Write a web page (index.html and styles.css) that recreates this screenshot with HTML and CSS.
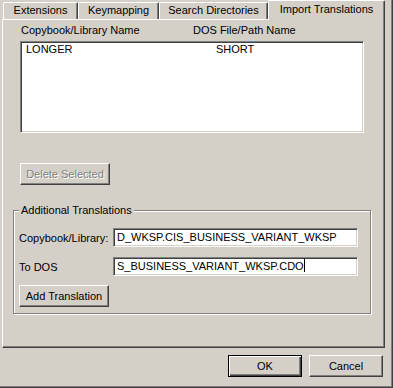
FILE: index.html
```html
<!DOCTYPE html>
<html lang="en">
<head>
  <meta charset="UTF-8">
  <title>Import Translations</title>
  <link rel="stylesheet" href="styles.css">
</head>
<body>
  <div class="window">
    <div class="tabs">
      <div class="tab tab-ext">Extensions</div>
      <div class="tab tab-key">Keymapping</div>
      <div class="tab tab-search">Search Directories</div>
      <div class="tab tab-import active">Import Translations</div>
    </div>

    <div class="panel">
      <div class="colhead">
        <span class="col-lib">Copybook/Library Name</span>
        <span>DOS File/Path Name</span>
      </div>
      <div class="list">
        <div class="list-row">
          <span class="col-item">LONGER</span>
          <span>SHORT</span>
        </div>
      </div>

      <div class="btn btn-small btn-delete disabled">Delete Selected</div>

      <div class="group">
        <div class="group-label">Additional Translations</div>
        <div class="field-row first">
          <span class="field-label">Copybook/Library:</span>
          <div class="field">D_WKSP.CIS_BUSINESS_VARIANT_WKSP</div>
        </div>
        <div class="field-row">
          <span class="field-label">To DOS</span>
          <div class="field">S_BUSINESS_VARIANT_WKSP.CDO<span class="caret"></span></div>
        </div>
        <div class="btn btn-small btn-add">Add Translation</div>
      </div>
    </div>

    <div class="footer">
      <div class="btn btn-wide default">OK</div>
      <div class="btn btn-wide">Cancel</div>
    </div>
  </div>
</body>
</html>
```

FILE: styles.css
```css
body {
  margin: 0;
  background: #d4d0c8;
  font-family: "Liberation Sans", Arial, sans-serif;
  font-size: 11px;
  color: #000;
}
.window {
  width: 393px;
  height: 388px;
  box-sizing: border-box;
  padding-left: 2px;
  border-right: 1px solid #404040;
  border-bottom: 1px solid #404040;
  box-shadow: inset -1px -1px 0 #808080;
}

/* tab strip */
.tabs {
  display: flex;
  align-items: flex-end;
  height: 19px;
  padding-left: 1px;
}
.tab {
  height: 17px;
  box-sizing: border-box;
  border-top: 1px solid #fff;
  border-left: 1px solid #fff;
  border-right: 1px solid #404040;
  border-radius: 2px 2px 0 0;
  box-shadow: inset -1px 0 0 #808080;
  line-height: 15px;
  text-align: center;
}
.tab-ext { width: 75px; }
.tab-key { width: 81px; }
.tab-search { width: 109px; }
.tab-import { width: 117px; }
.tab.active {
  height: 20px;
  margin-bottom: -1px;
  position: relative;
  z-index: 1;
  background: #d4d0c8;
  line-height: 16px;
}

/* page */
.panel {
  width: 383px;
  height: 329px;
  box-sizing: border-box;
  border-top: 1px solid #fff;
  border-left: 1px solid #fff;
  border-right: 1px solid #404040;
  border-bottom: 1px solid #404040;
  box-shadow: inset -1px -1px 0 #808080;
}
.colhead {
  display: flex;
  padding: 4px 0 0 18px;
  line-height: 13px;
}
.col-lib { width: 172px; }
.list {
  width: 344px;
  height: 92px;
  box-sizing: border-box;
  margin: 4px 0 0 17px;
  padding-left: 5px;
  background: #fff;
  border: 1px solid;
  border-color: #808080 #fff #fff #808080;
  box-shadow: inset 1px 1px 0 #404040, inset -1px -1px 0 #d4d0c8;
}
.list-row {
  display: flex;
  padding-top: 1px;
  line-height: 13px;
}
.col-item { width: 190px; }

/* buttons */
.btn {
  box-sizing: border-box;
  height: 22px;
  line-height: 20px;
  text-align: center;
  border: 1px solid;
  border-color: #fff #404040 #404040 #fff;
  box-shadow: inset -1px -1px 0 #808080;
}
.btn-small { width: 90px; margin-left: 17px; }
.btn-delete { margin-top: 30px; }
.btn.disabled {
  color: #808080;
  text-shadow: 1px 1px 0 #fff;
}
.btn-wide { width: 74px; }
.btn.default {
  border-color: #000;
  box-shadow: inset 1px 1px 0 #fff, inset -1px -1px 0 #404040, inset -2px -2px 0 #808080;
}

/* group box */
.group {
  width: 358px;
  height: 104px;
  box-sizing: border-box;
  margin: 25px 0 0 10px;
  border: 1px solid #808080;
  box-shadow: 1px 1px 0 #fff, inset 1px 1px 0 #fff;
}
.group-label {
  width: fit-content;
  margin: -7px 0 0 5px;
  padding: 0 2px;
  background: #d4d0c8;
  line-height: 13px;
}
.field-row {
  display: flex;
  align-items: center;
  margin-top: 10px;
  padding-left: 5px;
}
.field-row.first { margin-top: 11px; }
.field-label { width: 94px; }
.field {
  width: 245px;
  height: 19px;
  box-sizing: border-box;
  padding-left: 3px;
  line-height: 17px;
  background: #fff;
  white-space: nowrap;
  overflow: hidden;
  border: 1px solid;
  border-color: #808080 #fff #fff #808080;
  box-shadow: inset 1px 1px 0 #404040, inset -1px -1px 0 #d4d0c8;
}
.caret {
  display: inline-block;
  width: 1px;
  height: 13px;
  vertical-align: -2px;
  background: #000;
}
.btn-add { margin: 9px 0 0 5px; }

/* dialog buttons */
.footer {
  display: flex;
  justify-content: flex-end;
  gap: 7px;
  padding: 7px 9px 0 0;
}
```
